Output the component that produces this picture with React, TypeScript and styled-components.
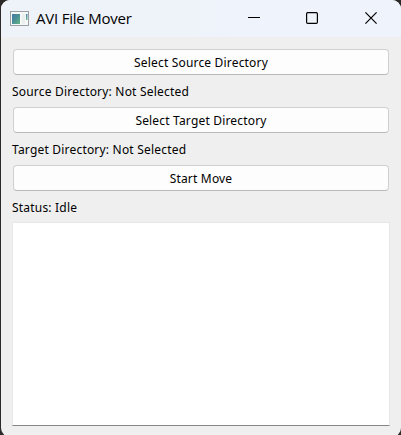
import React from "react";
import styled, { createGlobalStyle } from "styled-components";

const GlobalStyle = createGlobalStyle`
  * { box-sizing: border-box; }
  html, body { margin: 0; background: #2c2a28; overflow: hidden; }
`;

const Desktop = styled.div`
  width: 401px;
  height: 435px;
  padding-left: 1px;
  overflow: hidden;
  background: #2c2a28;
`;

const Window = styled.main`
  width: 400px;
  height: 437px;
  border-radius: 9px;
  overflow: hidden;
  background: #efefef;
  color: #000;
  font: 12px/16px "Noto Sans", sans-serif;
`;

const TitleBar = styled.header`
  display: flex;
  align-items: center;
  height: 37px;
  padding: 0 0 1px 9px;
  background: linear-gradient(90deg, #edf3f8, #eff3fb 60%, #eff3fb);
`;

const Title = styled.h1`
  flex: 1;
  margin: 0 0 0 7px;
  font: 400 15px/20px "Open Sans", sans-serif;
  letter-spacing: -0.22px;
  white-space: nowrap;
`;

const Controls = styled.div`
  display: flex;
  width: 176px;
`;

const ControlButton = styled.button`
  display: flex;
  align-items: center;
  justify-content: center;
  width: 58px;
  height: 36px;
  padding: 0;
  border: 0;
  background: none;

  &:last-child {
    width: 60px;
  }
`;

const Content = styled.section`
  display: flex;
  flex-direction: column;
  padding: 12px 12px 0 12px;
`;

const PushButton = styled.button`
  height: 26px;
  padding: 2px 0 0;
  border: 1px solid #d0d0d0;
  border-bottom-color: #b9b9b9;
  border-radius: 4px;
  background: #fdfdfd;
  color: #000;
  font: inherit;
  letter-spacing: 0.18px;
`;

const Label = styled.p`
  height: 16px;
  margin: 9px 0 7px -1px;
  letter-spacing: 0.2px;
  white-space: nowrap;
`;

const Log = styled.div`
  height: 204px;
  margin: -1px -1px 0;
  border: 1px solid #e7e7e7;
  border-bottom-color: #868686;
  background: #fff;
`;

const AppIcon = () => (
  <svg width="19" height="15" viewBox="0 0 19 15">
    <defs>
      <linearGradient id="screen" x1="0" y1="0" x2="1" y2="1">
        <stop offset="0" stopColor="#4878a4" />
        <stop offset=".5" stopColor="#4a9195" />
        <stop offset="1" stopColor="#64b583" />
      </linearGradient>
      <linearGradient id="strip" x1="0" y1="0" x2="0" y2="1">
        <stop offset="0" stopColor="#4f86ae" />
        <stop offset="1" stopColor="#70b995" />
      </linearGradient>
    </defs>
    <rect x=".5" y=".5" width="18" height="14" fill="#f6f7f7" stroke="#9ba0a4" />
    <rect x="2" y="3" width="8" height="10" fill="url(#screen)" />
    <rect x="12" y="3" width="3" height="10" fill="#e9eeee" />
    <rect x="16" y="3" width="1.5" height="6" fill="url(#strip)" />
  </svg>
);

export default function App() {
  return (
    <>
      <GlobalStyle />
      <Desktop>
        <Window>
          <TitleBar>
            <AppIcon />
            <Title>AVI File Mover</Title>
            <Controls>
              <ControlButton aria-label="Minimize">
                <svg width="12" height="12"><path d="M0 5.5H12" stroke="#000" /></svg>
              </ControlButton>
              <ControlButton aria-label="Maximize">
                <svg width="12" height="12"><rect x=".6" y=".6" width="10.8" height="10.8" rx="1.2" fill="none" stroke="#000" strokeWidth="1.2" /></svg>
              </ControlButton>
              <ControlButton aria-label="Close">
                <svg width="12" height="12"><path d="M.4 .4L11.6 11.6M11.6 .4L.4 11.6" stroke="#000" strokeWidth="1.2" /></svg>
              </ControlButton>
            </Controls>
          </TitleBar>
          <Content>
            <PushButton>Select Source Directory</PushButton>
            <Label>Source Directory: Not Selected</Label>
            <PushButton>Select Target Directory</PushButton>
            <Label>Target Directory: Not Selected</Label>
            <PushButton>Start Move</PushButton>
            <Label>Status: Idle</Label>
            <Log />
          </Content>
        </Window>
      </Desktop>
    </>
  );
}
